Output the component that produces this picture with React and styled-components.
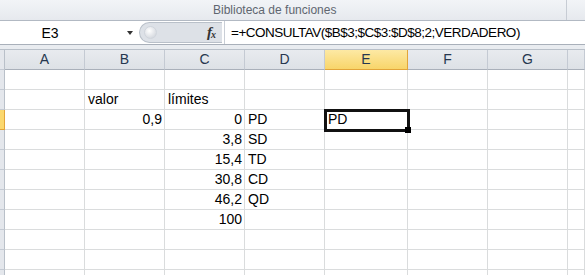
import React from 'react';
import styled, { createGlobalStyle } from 'styled-components';

const GlobalStyle = createGlobalStyle`
  html, body {
    margin: 0;
    padding: 0;
    background: #ffffff;
    overflow: hidden;
  }
  body {
    font-family: "Liberation Sans", Arial, sans-serif;
    color: #000;
  }
`;

const Ventana = styled.div`
  width: 585px;
  height: 275px;
  overflow: hidden;
  display: flex;
  flex-direction: column;
  background: #fff;

  & > * {
    flex-shrink: 0;
  }
`;

const Cinta = styled.div`
  height: 21px;
  display: flex;
  background: linear-gradient(#f2f4f7, #e6e9ee);
  border-bottom: 1px solid #b2b9c3;
  box-sizing: border-box;
`;

const GrupoCinta = styled.div`
  width: 567px;
  border-right: 1px solid #c7ccd4;
  box-sizing: border-box;
  font-size: 12px;
  line-height: 20px;
  color: #5f6670;
  padding-left: 213px;
`;

const BarraFormulas = styled.div`
  height: 24px;
  display: flex;
  background: #fff;
  border-bottom: 1px solid #a9b0ba;
  box-sizing: border-box;
`;

const CuadroNombre = styled.div`
  width: 139px;
  display: flex;
  align-items: center;
  font-size: 14px;
`;

const TextoNombre = styled.span`
  width: 100px;
  text-align: center;
`;

const Flecha = styled.span`
  margin-left: 27px;
  width: 0;
  height: 0;
  border-left: 3.5px solid transparent;
  border-right: 3.5px solid transparent;
  border-top: 4px solid #333;
`;

const Separador = styled.div`
  width: 83px;
  margin: 1px 0;
  background: #dde1e7;
  border-radius: 12px 0 0 12px;
  border: 1px solid #b9c0c9;
  border-right: none;
  box-sizing: border-box;
  display: flex;
  align-items: center;
  padding-left: 4px;
`;

const Perilla = styled.span`
  width: 11px;
  height: 11px;
  border-radius: 50%;
  background: radial-gradient(circle at 40% 35%, #ffffff, #c9ced6);
  border: 1px solid #d0d5dc;
`;

const Fx = styled.span`
  margin-left: auto;
  margin-right: 7px;
  font-family: "Liberation Serif", "Times New Roman", serif;
  font-style: italic;
  font-weight: bold;
  font-size: 15px;
  color: #333;
  letter-spacing: -1px;

  sub {
    font-size: 10px;
    vertical-align: -1px;
  }
`;

const EntradaFormula = styled.div`
  flex: 1;
  border-left: 2px solid #ffffff;
  box-shadow: inset 1px 0 0 #c9ced6;
  padding-left: 7px;
  font-size: 13.5px;
  letter-spacing: -0.5px;
  line-height: 23px;
`;

const Espacio = styled.div`
  height: 4px;
  background: #e9ecf0;
  border-bottom: 1px solid #b9c0c9;
`;

const Hoja = styled.div`
  display: grid;
  grid-template-columns: 5px 80px 80px 80px 80px 83px 80px 80px 1fr;
  grid-auto-rows: 20px;
`;

const Encabezado = styled.div`
  box-sizing: border-box;
  border-right: 1px solid ${(p) => (p.$activo ? '#e2a53a' : '#c4cad3')};
  border-bottom: 1px solid ${(p) => (p.$activo ? '#e2a53a' : '#a9b0ba')};
  background: ${(p) =>
    p.$activo ? 'linear-gradient(#fde9a4, #f8d56a)' : 'linear-gradient(#e8ebef, #dde1e6)'};
  font-size: 14px;
  line-height: 19px;
  text-align: center;
  color: #26374f;
`;

const EncabezadoFila = styled.div`
  box-sizing: border-box;
  border-right: 1px solid ${(p) => (p.$activo ? '#e2a53a' : '#b9c0c9')};
  border-bottom: 1px solid ${(p) => (p.$activo ? '#e2a53a' : '#c4cad3')};
  background: ${(p) => (p.$activo ? '#fbd86e' : '#e4e7ec')};
`;

const Celda = styled.div`
  position: relative;
  box-sizing: border-box;
  border-right: 1px solid #dadcdd;
  border-bottom: 1px solid #dadcdd;
  font-size: 14px;
  line-height: 19px;
  padding: 0 ${(p) => (p.$numero ? '2px' : '0')} 0 ${(p) => (p.$numero ? '0' : '3px')};
  text-align: ${(p) => (p.$numero ? 'right' : 'left')};
  white-space: nowrap;
`;

const Seleccion = styled.div`
  position: absolute;
  z-index: 2;
  left: -1px;
  top: -1px;
  width: 86px;
  height: 23px;
  box-sizing: border-box;
  border: 3px solid #111;
  pointer-events: none;
`;

const Controlador = styled.div`
  position: absolute;
  right: -4px;
  bottom: -4px;
  width: 6px;
  height: 6px;
  background: #000;
`;

const columnas = ['A', 'B', 'C', 'D', 'E', 'F', 'G', ''];

const filas = [
  {},
  { B: 'valor', C: 'límites' },
  { B: '0,9', C: '0', D: 'PD', E: 'PD' },
  { C: '3,8', D: 'SD' },
  { C: '15,4', D: 'TD' },
  { C: '30,8', D: 'CD' },
  { C: '46,2', D: 'QD' },
  { C: '100' },
  {},
  {},
  {},
];

const esNumero = (v) => v !== undefined && /^[\d,]+$/.test(v);

function App() {
  return (
    <Ventana>
      <GlobalStyle />
      <Cinta>
        <GrupoCinta>Biblioteca de funciones</GrupoCinta>
      </Cinta>
      <BarraFormulas>
        <CuadroNombre>
          <TextoNombre>E3</TextoNombre>
          <Flecha />
        </CuadroNombre>
        <Separador>
          <Perilla />
          <Fx>
            f<sub>x</sub>
          </Fx>
        </Separador>
        <EntradaFormula>=+CONSULTAV($B$3;$C$3:$D$8;2;VERDADERO)</EntradaFormula>
      </BarraFormulas>
      <Espacio />
      <Hoja>
        <EncabezadoFila />
        {columnas.map((c, i) => (
          <Encabezado key={i} $activo={c === 'E'}>
            {c}
          </Encabezado>
        ))}
        {filas.map((fila, r) => (
          <React.Fragment key={r}>
            <EncabezadoFila $activo={r === 2} />
            {columnas.map((c, i) => {
              const valor = fila[c];
              const activa = r === 2 && c === 'E';
              return (
                <Celda key={i} $numero={esNumero(valor)}>
                  {valor}
                  {activa && (
                    <Seleccion>
                      <Controlador />
                    </Seleccion>
                  )}
                </Celda>
              );
            })}
          </React.Fragment>
        ))}
      </Hoja>
    </Ventana>
  );
}

export default App;
